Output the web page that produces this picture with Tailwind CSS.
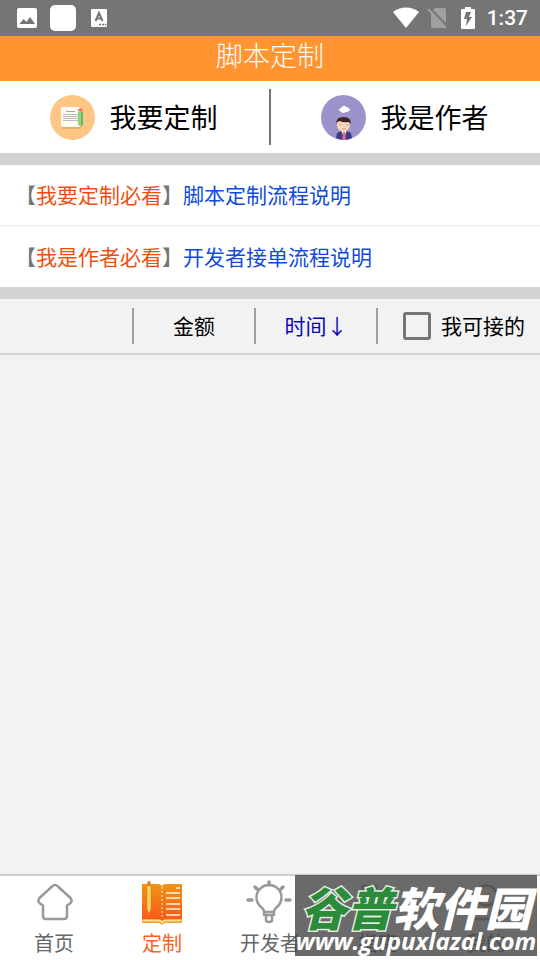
<!DOCTYPE html>
<html lang="zh-CN">
<head>
    <meta charset="UTF-8">
    <meta name="viewport" content="width=device-width, initial-scale=1.0">
    <title>脚本定制</title>
    <script src="https://cdn.jsdelivr.net/npm/@tailwindcss/browser@4"></script>
</head>
<body class="bg-[#f2f2f2] text-black font-['Noto_Sans_CJK_SC',sans-serif]">
    <div class="relative flex flex-col min-h-screen">
        <!-- Status bar -->
        <div class="flex items-center justify-between h-9 px-3 bg-[#757575] text-white">
            <div class="flex items-center gap-3 pl-1">
                <svg class="w-[22px] h-[22px]" viewBox="0 0 22 22">
                    <rect x="1" y="1" width="20" height="20" rx="2" fill="#fff"/>
                    <path d="M3.500 17l4-5 3 3 3.500-5 5 7z" fill="#757575"/>
                </svg>
                <span class="size-[26px] rounded-[5px] bg-white"></span>
                <svg class="w-[22px] h-[22px]" viewBox="0 0 22 22">
                    <rect x="3" y="2" width="16" height="18" rx="1" fill="#fff"/>
                    <path d="M7.500 14l3.500-8 3.500 8M8.500 11.500h5" fill="none" stroke="#757575" stroke-width="2"/>
                    <path d="M11 17.500h2M14 17.500h2M17 17.500h1.500" stroke="#757575" stroke-width="1.500"/>
                </svg>
            </div>
            <div class="flex items-center">
                <svg class="w-[26px] h-[22px] mr-2" viewBox="0 0 26 22">
                    <path d="M13 21L0 5c7-6 19-6 26 0z" fill="#fff"/>
                </svg>
                <svg class="w-[22px] h-[22px] mr-3" viewBox="0 0 22 22">
                    <path d="M8 1h9a2 2 0 0 1 2 2v18H6a2 2 0 0 1-2-2V5z" fill="#a0a0a0"/>
                    <path d="M2 0l19 20" stroke="#757575" stroke-width="2"/>
                    <path d="M1 2l18 19" stroke="#a0a0a0" stroke-width="2"/>
                </svg>
                <svg class="w-[14px] h-[22px] mr-3" viewBox="0 0 14 22">
                    <path d="M4 0h6v2h3q1 0 1 1v18q0 1-1 1H1q-1 0-1-1V3q0-1 1-1h3z" fill="#fff"/>
                    <path d="M5 5h5l-2 5h3l-6 9 1-7H3z" fill="#757575"/>
                </svg>
                <span class="text-[21px] leading-9 font-[Roboto,sans-serif] font-medium">1:37</span>
            </div>
        </div>

        <header class="h-[45px] bg-[#ff9430] text-center">
            <h1 class="text-[27px] leading-[38px] text-white font-light">脚本定制</h1>
        </header>

        <!-- Role entries -->
        <div class="flex items-center h-[72px] bg-white">
            <button class="flex-1 flex items-center justify-center gap-[15px] h-14 pr-0.5 text-[27px] border-r-2 border-[#757575]">
                <svg class="size-[45px]" viewBox="0 0 45 45">
                    <circle cx="22.500" cy="22.500" r="22.500" fill="#fec684"/>
                    <rect x="11" y="14" width="20" height="20" rx="2" fill="#e8ad68"/>
                    <rect x="11" y="12" width="19" height="20" rx="1" fill="#fffaf2"/>
                    <path d="M16 16.500h9" stroke="#a9a9a9"/>
                    <path d="M13 19.500h15M13 21.500h15M13 23.500h15M13 25.500h15" stroke="#bdbdbd"/>
                    <path d="M28 17h5v13l-2.500 1L28 30z" fill="#8ed67a"/>
                    <path d="M31 17h2v13l-2 1z" fill="#65b967"/>
                    <path d="M28 16.500v-2q2.500-3 5 0v2z" fill="#e98572"/>
                </svg>
                我要定制
            </button>
            <button class="flex-1 flex items-center justify-center gap-[15px] h-14 pr-0.5 text-[27px]">
                <svg class="size-[45px]" viewBox="0 0 45 45">
                    <circle cx="22.500" cy="22.500" r="22.500" fill="#9b93cb"/>
                    <path d="M20 17q-4-3 0-4 3-4 5-1 3 0 4 3-1 2-4 2-3 2-5 0z" fill="#fff"/>
                    <path d="M15 43l1-5 4-2h6l4 2 1 5q-8 4-16 0z" fill="#3e3d83"/>
                    <path d="M20 35h6l-3 8z" fill="#fff"/>
                    <path d="M22 37h2l1 8h-4z" fill="#d36f8e"/>
                    <path d="M16 26h13v5q-1 5-6.500 6-5.500-1-6.500-6z" fill="#f6d7bc"/>
                    <path d="M15.500 29q-1-7 7-7t7 7l-2-2q-5 1-9-1-3 1-3 3z" fill="#3e2620"/>
                    <path d="M18 30h3M25 30h3M21 34h4" stroke="#b98a72" stroke-width=".7"/>
                </svg>
                我是作者
            </button>
        </div>

        <!-- Guides -->
        <div class="border-y-12 border-[#d3d3d3] bg-white text-[21px] text-[#757575]">
            <a href="#" class="flex items-center h-[62px] pl-[15px] border-b-2 border-[#f2f2f2]">【<span class="text-[#f04f10]">我要定制必看</span>】<span class="text-[#114bdb]">脚本定制流程说明</span></a>
            <a href="#" class="flex items-center h-[60px] pl-[15px]">【<span class="text-[#f04f10]">我是作者必看</span>】<span class="text-[#114bdb]">开发者接单流程说明</span></a>
        </div>

        <!-- Sorting -->
        <div class="flex items-center h-14 border-b-2 border-[#d3d3d3] text-[21px]">
            <div class="flex-1"></div>
            <button class="w-[122px] h-9 border-l-2 border-[#a0a0a0]">金额</button>
            <button class="w-[122px] h-9 border-l-2 border-[#a0a0a0] text-[#0808bb]">时间↓</button>
            <label class="flex items-center gap-[10px] h-9 pl-[25px] pr-[15px] border-l-2 border-[#a0a0a0]">
                <input type="checkbox" class="appearance-none size-7 border-3 border-[#757575] rounded-[3px]">
                我可接的
            </label>
        </div>

        <main class="flex-1"></main>

        <!-- Bottom navigation -->
        <nav class="grid grid-cols-5 h-[86px] border-t-2 border-[#cccccc] bg-white text-xl text-[#666666]">
            <a href="#" class="flex flex-col items-center">
                <svg class="size-[50px]" viewBox="0 0 50 50" fill="none" stroke="#999" stroke-width="2.500" stroke-linejoin="round">
                    <path d="M23 10.500L10.500 22Q8 25 11 27.500L14 29.500V40q0 3 3 3h18q3 0 3-3V29.500l3-2q3-2.500 .5-5.500L29 10.500q-3-3-6 0z"/>
                </svg>
                <span class="leading-[34px]">首页</span>
            </a>
            <a href="#" class="flex flex-col items-center text-[#f26522]">
                <svg class="size-[50px]" viewBox="0 0 50 50">
                    <defs>
                        <linearGradient id="book" x2="0" y2="1">
                            <stop stop-color="#ee9515"/>
                            <stop offset="1" stop-color="#fc5618"/>
                        </linearGradient>
                    </defs>
                    <path d="M5 43h40v4H28l-3 2-3-2H5z" fill="#f2a73c"/>
                    <path d="M5 8h16q3 0 4 2 1-2 4-2h16v35H29q-3 0-4 2-1-2-4-2H5z" fill="url(#book)"/>
                    <path d="M6 44.500h15q3 0 4 2 1-2 4-2h15" fill="none" stroke="#ffe08a" stroke-width="1.500"/>
                    <path d="M25 11v31" stroke="#fff1cc" stroke-dasharray="2 2"/>
                    <path d="M39 12h4M29 17h14M29 22h14M29 28h14M29 33h14M29 39h14" stroke="#fff4d8" stroke-width="1.500"/>
                    <path d="M10 10h4v23l-2 5-2-5z" fill="#ffd968" stroke="#c8771b" stroke-width=".5"/>
                    <path d="M10 9q0-4 2-4t2 4z" fill="#e78328"/>
                </svg>
                <span class="leading-[34px]">定制</span>
            </a>
            <a href="#" class="flex flex-col items-center">
                <svg class="size-[50px]" viewBox="0 0 50 50" fill="none" stroke="#999" stroke-width="2.500" stroke-linecap="round" stroke-linejoin="round">
                    <path d="M19 36q0-3-3-5a12.500 12.500 0 1 1 16 0q-3 2-3 5zM19 36v3h10v-3M21 39v5q0 2 3 2t3-2v-5"/>
                    <path d="M24 6v3M10 11l2 2M38 11l-2 2M3 24h4M41 24h4" stroke-width="3.500"/>
                </svg>
                <span class="leading-[34px]">开发者</span>
            </a>
            <a href="#" class="flex flex-col items-center">
                <svg class="size-[50px]" viewBox="0 0 50 50" fill="#999">
                    <path d="M8 9h16v8H8zM28 13l6-5 11 10-7 8zM8 22h10v20H8z"/>
                </svg>
                <span class="leading-[34px]">指南</span>
            </a>
            <a href="#" class="flex flex-col items-center">
                <svg class="size-[50px]" viewBox="0 0 50 50" fill="none" stroke="#999" stroke-width="2.500">
                    <path d="M35 16a10 10 0 1 0 0 7M19 27q-8 4-9 16h30q-1-12-9-16"/>
                </svg>
                <span class="leading-[34px]">我的</span>
            </a>
        </nav>

        <!-- Site watermark -->
        <div class="absolute right-[3px] bottom-1 w-[242px] h-[81px] pt-2 bg-[#454545]/80 text-white text-center whitespace-nowrap">
            <p class="text-[46px] leading-[46px] font-black italic"><span class="text-[#2c8b3b] [-webkit-text-stroke:3px_#e5eee5] [paint-order:stroke_fill]">谷普</span>软件园</p>
            <p class="text-[24px] leading-6 font-bold italic font-['Open_Sans',sans-serif]">www.gupuxlazal.com</p>
        </div>
    </div>
</body>
</html>
